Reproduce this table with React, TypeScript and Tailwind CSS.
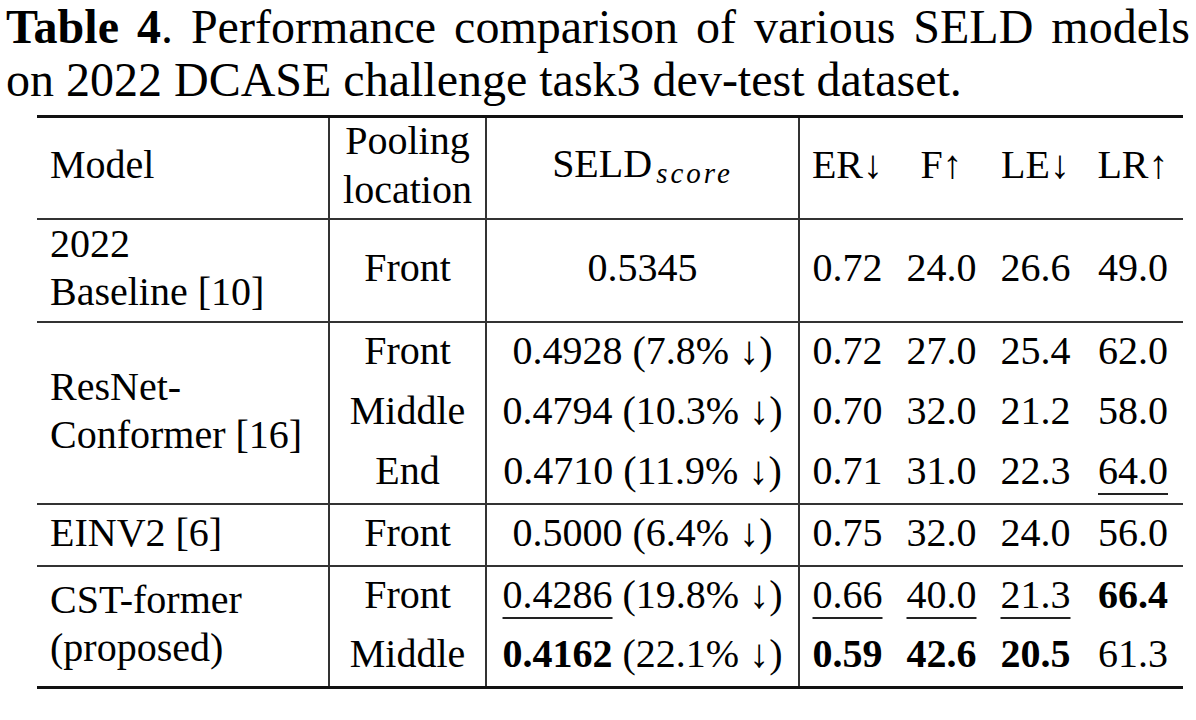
type Val = { t: string; b?: boolean; u?: boolean };

type Row = {
  pool: string;
  score: Val;
  delta?: string;
  metrics: Val[];
  h: string;
};

type Group = {
  model: string[];
  rows: Row[];
};

const v = (t: string, b = false, u = false): Val => ({ t, b, u });

const groups: Group[] = [
  {
    model: ['2022', 'Baseline [10]'],
    rows: [
      { pool: 'Front', score: v('0.5345'), metrics: [v('0.72'), v('24.0'), v('26.6'), v('49.0')], h: 'h-[103px]' },
    ],
  },
  {
    model: ['ResNet-', 'Conformer [16]'],
    rows: [
      { pool: 'Front', score: v('0.4928'), delta: '(7.8% ↓)', metrics: [v('0.72'), v('27.0'), v('25.4'), v('62.0')], h: 'h-[61px]' },
      { pool: 'Middle', score: v('0.4794'), delta: '(10.3% ↓)', metrics: [v('0.70'), v('32.0'), v('21.2'), v('58.0')], h: 'h-[60px]' },
      { pool: 'End', score: v('0.4710'), delta: '(11.9% ↓)', metrics: [v('0.71'), v('31.0'), v('22.3'), v('64.0', false, true)], h: 'h-[61px]' },
    ],
  },
  {
    model: ['EINV2 [6]'],
    rows: [
      { pool: 'Front', score: v('0.5000'), delta: '(6.4% ↓)', metrics: [v('0.75'), v('32.0'), v('24.0'), v('56.0')], h: 'h-[62px]' },
    ],
  },
  {
    model: ['CST-former', '(proposed)'],
    rows: [
      { pool: 'Front', score: v('0.4286', false, true), delta: '(19.8% ↓)', metrics: [v('0.66', false, true), v('40.0', false, true), v('21.3', false, true), v('66.4', true)], h: 'h-[61px]' },
      { pool: 'Middle', score: v('0.4162', true), delta: '(22.1% ↓)', metrics: [v('0.59', true), v('42.6', true), v('20.5', true), v('61.3')], h: 'h-[61px]' },
    ],
  },
];

const captionWords = ['Performance', 'comparison', 'of', 'various', 'SELD', 'models'];

const Value = ({ val }: { val: Val }) => (
  <span
    className={
      (val.b ? 'font-bold ' : '') +
      (val.u ? 'underline decoration-2 underline-offset-[9px] decoration-[#222]' : '')
    }
  >
    {val.t}
  </span>
);

const vline = 'border-r-2 border-r-[#333]';

export default function App() {
  return (
    <div className="w-[1196px] h-[720px] overflow-hidden bg-white text-black [font-family:Liberation_Serif,serif] **:[font-family:Liberation_Serif,serif]">
      {/* Caption */}
      <div className="pl-[6px] w-[1190px] text-[48px] leading-[53px]">
        <div className="flex justify-between">
          <span className="font-bold">Table</span>
          <span>
            <span className="font-bold">4</span>.
          </span>
          {captionWords.map((w) => (
            <span key={w}>{w}</span>
          ))}
        </div>
        <div>on 2022 DCASE challenge task3 dev-test dataset.</div>
      </div>

      <table className="table-fixed border-collapse ml-[37px] mt-[9px] w-[1146px] text-[40px] leading-[50px]">
        <colgroup>
          <col className="w-[292px]" />
          <col className="w-[157px]" />
          <col className="w-[313px]" />
          <col className="w-[96px]" />
          <col className="w-[93px]" />
          <col className="w-[95px]" />
          <col className="w-[100px]" />
        </colgroup>
        <thead>
          <tr className="h-[102px] border-t-[3px] border-t-[#111] border-b-2 border-b-[#333]">
            <th className={`font-normal text-left pl-[13px] pb-[5px] ${vline}`}>Model</th>
            <th className={`font-normal text-center leading-[49px] ${vline}`}>
              <div className="-mt-[5px]">
                <div>Pooling</div>
                <div>location</div>
              </div>
            </th>
            <th className={`font-normal text-center pb-[5px] ${vline}`}>
              SELD
              <span className="italic text-[29px] tracking-[3px] relative top-[6px] ml-[4px]">score</span>
            </th>
            <th className="font-normal text-center pb-[5px]">ER↓</th>
            <th className="font-normal text-center pb-[5px]">F↑</th>
            <th className="font-normal text-center pb-[5px]">LE↓</th>
            <th className="font-normal text-center pb-[5px]">LR↑</th>
          </tr>
        </thead>
        {groups.map((g, gi) => (
          <tbody
            key={gi}
            className={
              gi === groups.length - 1
                ? 'border-b-[3px] border-b-[#111]'
                : 'border-b-2 border-b-[#333]'
            }
          >
            {g.rows.map((r, ri) => (
              <tr key={ri} className={r.h}>
                {ri === 0 && (
                  <td rowSpan={g.rows.length} className={`text-left pl-[13px] pb-[4px] leading-[48px] align-middle ${vline}`}>
                    {g.model.map((m) => (
                      <div key={m} className="whitespace-nowrap">
                        {m}
                      </div>
                    ))}
                  </td>
                )}
                <td className={`text-center pb-[4px] ${vline}`}>{r.pool}</td>
                <td className={`text-center whitespace-nowrap pb-[4px] ${vline}`}>
                  <Value val={r.score} />
                  {r.delta && <span> {r.delta}</span>}
                </td>
                {r.metrics.map((m, mi) => (
                  <td key={mi} className="text-center pb-[4px]">
                    <Value val={m} />
                  </td>
                ))}
              </tr>
            ))}
          </tbody>
        ))}
      </table>
    </div>
  );
}
